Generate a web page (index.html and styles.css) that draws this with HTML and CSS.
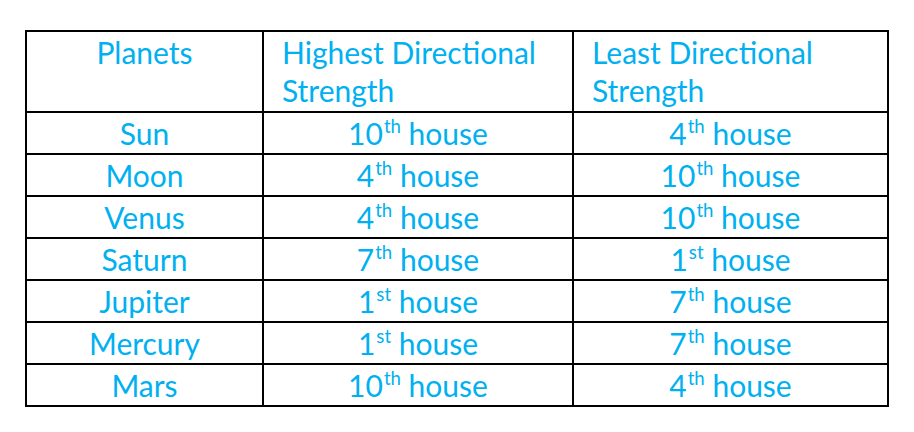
FILE: index.html
```html
<!DOCTYPE html>
<html>
<head>
<meta charset="utf-8">
<link rel="stylesheet" href="styles.css">
</head>
<body>
<div class="grid">
  <div class="cell head center"><span>Planets</span></div>
  <div class="cell head"><span>Highest Directional Strength</span></div>
  <div class="cell head"><span>Least Directional Strength</span></div>

  <div class="cell"><span>Sun</span></div>
  <div class="cell"><span>10<sup>th</sup> house</span></div>
  <div class="cell"><span>4<sup>th</sup> house</span></div>

  <div class="cell"><span>Moon</span></div>
  <div class="cell"><span>4<sup>th</sup> house</span></div>
  <div class="cell"><span>10<sup>th</sup> house</span></div>

  <div class="cell"><span>Venus</span></div>
  <div class="cell"><span>4<sup>th</sup> house</span></div>
  <div class="cell"><span>10<sup>th</sup> house</span></div>

  <div class="cell"><span>Saturn</span></div>
  <div class="cell"><span>7<sup>th</sup> house</span></div>
  <div class="cell"><span>1<sup>st</sup> house</span></div>

  <div class="cell"><span>Jupiter</span></div>
  <div class="cell"><span>1<sup>st</sup> house</span></div>
  <div class="cell"><span>7<sup>th</sup> house</span></div>

  <div class="cell"><span>Mercury</span></div>
  <div class="cell"><span>1<sup>st</sup> house</span></div>
  <div class="cell"><span>7<sup>th</sup> house</span></div>

  <div class="cell"><span>Mars</span></div>
  <div class="cell"><span>10<sup>th</sup> house</span></div>
  <div class="cell"><span>4<sup>th</sup> house</span></div>
</div>
</body>
</html>
```
FILE: styles.css
```css
html, body {
  margin: 0;
  padding: 0;
  background: #ffffff;
}

body {
  font-family: "Lato", "Liberation Sans", sans-serif;
  font-size: 30px;
  color: #00b0f0;
}

.grid {
  display: grid;
  grid-template-columns: 237px 310px 315px;
  grid-template-rows: 81px repeat(7, 42px);
  width: max-content;
  margin: 30px 0 0 25px;
  border-left: 2px solid #000;
  border-top: 2px solid #000;
}

.cell {
  border-right: 2px solid #000;
  border-bottom: 2px solid #000;
  display: flex;
  align-items: center;
  justify-content: center;
  line-height: 38px;
  white-space: nowrap;
}

.cell.head {
  align-items: flex-start;
  justify-content: flex-start;
  white-space: normal;
  padding: 1px 20px 0 18px;
}

.cell.head.center {
  justify-content: center;
  padding: 1px 0 0 0;
}

sup {
  font-size: 0.62em;
  line-height: 0;
  vertical-align: 0.62em;
  margin-left: 1px;
}
```
